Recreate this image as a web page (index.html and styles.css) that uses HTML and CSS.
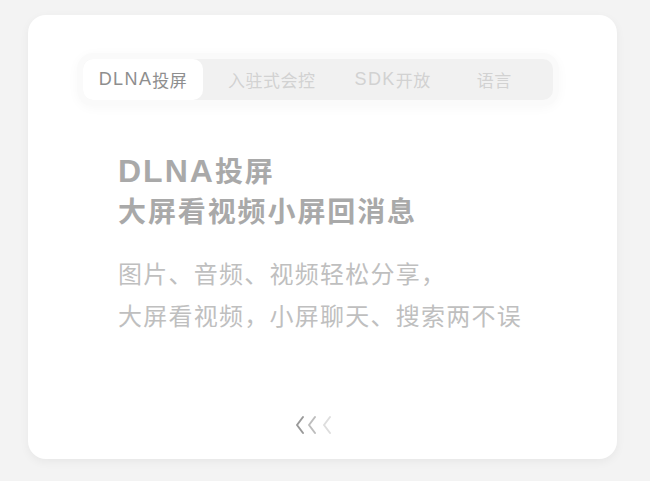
FILE: index.html
```html
<!DOCTYPE html>
<html lang="zh-CN">
<head>
<meta charset="utf-8">
<link rel="stylesheet" href="styles.css">
</head>
<body>
<div class="card">
  <div class="tabs">
    <div class="tab active"><span class="lat">DLNA</span>投屏</div>
    <div class="tab t2">入驻式会控</div>
    <div class="tab t3"><span class="lat">SDK</span>开放</div>
    <div class="tab t4">语言</div>
  </div>
  <div class="content">
    <h1 class="title"><span class="lat">DLNA</span>投屏<br>大屏看视频小屏回消息</h1>
    <p class="desc">图片、音频、视频轻松分享，<br>大屏看视频，小屏聊天、搜索两不误</p>
  </div>
  <div class="arrows">
    <svg width="40" height="20" viewBox="0 0 40 20">
      <polyline points="8,2 2,10 8,18" fill="none" stroke="#9a9a9a" stroke-width="2" stroke-linecap="round" stroke-linejoin="round"/>
      <polyline points="20,2 14,10 20,18" fill="none" stroke="#bdbdbd" stroke-width="2" stroke-linecap="round" stroke-linejoin="round"/>
      <polyline points="35,2 29,10 35,18" fill="none" stroke="#dedede" stroke-width="2" stroke-linecap="round" stroke-linejoin="round"/>
    </svg>
  </div>
</div>
</body>
</html>
```
FILE: styles.css
```css
html, body {
  margin: 0;
  padding: 0;
}
body {
  width: 650px;
  height: 481px;
  background: #f3f3f3;
  font-family: "Liberation Sans", "Noto Sans CJK SC", sans-serif;
  padding: 15px 0 0 28px;
  box-sizing: border-box;
}
.card {
  width: 589px;
  height: 444px;
  background: #ffffff;
  border-radius: 18px;
  box-shadow: 0 3px 10px rgba(0, 0, 0, 0.05);
  box-sizing: border-box;
  padding: 44px 0 24px 55px;
  display: flex;
  flex-direction: column;
}
.tabs {
  width: 470px;
  height: 41px;
  background: #f1f1f1;
  border-radius: 10px;
  box-shadow: 0 0 0 6px #fafafa, 0 2px 12px 6px rgba(0, 0, 0, 0.03);
  display: flex;
  align-items: center;
}
.tab {
  height: 41px;
  display: flex;
  align-items: center;
  font-size: 17px;
  letter-spacing: 0.5px;
  color: #d2d2d2;
  box-sizing: border-box;
  white-space: nowrap;
}
.tab .lat {
  font-size: 18px;
  letter-spacing: 1.4px;
}
.tab.active {
  width: 120px;
  justify-content: center;
  background: #ffffff;
  border-radius: 10px;
  color: #8e8e8e;
}
.t2 { margin-left: 25px; }
.t3 { margin-left: 39px; }
.t4 { margin-left: 46px; }
.content {
  margin-left: 35px;
}
.title {
  margin: 51px 0 0 0;
  font-size: 28px;
  line-height: 40px;
  font-weight: bold;
  color: #a9a9a9;
  letter-spacing: 1.9px;
}
.title .lat {
  font-size: 32px;
  letter-spacing: 2px;
}
.desc {
  margin: 21px 0 0 0;
  font-size: 24px;
  line-height: 42px;
  color: #bfbfbf;
  letter-spacing: 1.25px;
}
.arrows {
  margin-top: auto;
  display: flex;
  justify-content: center;
  padding-right: 70px;
}
.arrows svg {
  display: block;
}
```
